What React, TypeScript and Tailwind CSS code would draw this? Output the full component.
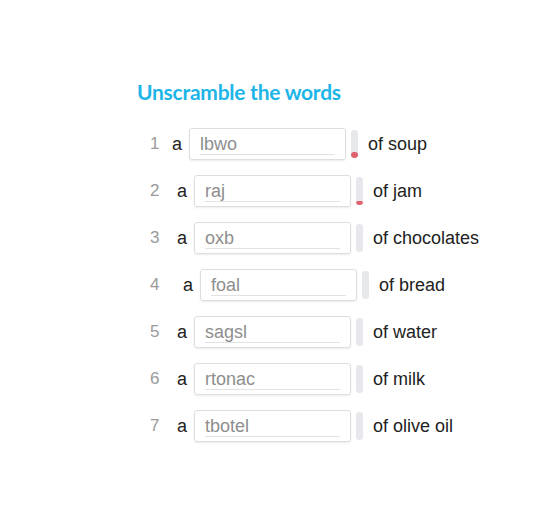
import React from "react";

const rows = [
  { n: 1, w: "lbwo", t: "of soup", ml: "ml-[14px]", fill: 6 },
  { n: 2, w: "raj", t: "of jam", ml: "ml-[19px]", fill: 4 },
  { n: 3, w: "oxb", t: "of chocolates", ml: "ml-[19px]", fill: 0 },
  { n: 4, w: "foal", t: "of bread", ml: "ml-[25px]", fill: 0 },
  { n: 5, w: "sagsl", t: "of water", ml: "ml-[19px]", fill: 0 },
  { n: 6, w: "rtonac", t: "of milk", ml: "ml-[19px]", fill: 0 },
  { n: 7, w: "tbotel", t: "of olive oil", ml: "ml-[19px]", fill: 0 },
];

export default function App() {
  return (
    <div className="w-[539px] h-[531px] bg-white" style={{ fontFamily: '"Liberation Sans", Arial, sans-serif' }}>
      <div className="pt-[80px] pl-[137px]">
        <h1 className="text-[21px] leading-[24px] font-bold text-[#1db5e8] tracking-[-0.25px]" style={{ fontFamily: 'Lato, "Noto Sans", sans-serif' }}>
          Unscramble the words
        </h1>
        <div className="mt-[24px] flex flex-col gap-[15px] pl-[13px]">
          {rows.map((r) => (
            <div key={r.n} className="flex items-center h-[32px]">
              <span className="w-[8px] text-[17px] text-[#9a9a9a] text-center">{r.n}</span>
              <span className={`${r.ml} text-[18px] text-[#222]`}>a</span>
              <div className="ml-[7px] w-[157px] h-[32px] rounded-[3px] border border-[#dedede] shadow-[0_1px_2px_rgba(0,0,0,0.08)] px-[10px] pt-[6px]">
                <div className="border-b border-[#e2e2e2] text-[18px] leading-[19px] text-[#8e8e8e]">{r.w}</div>
              </div>
              <div className="ml-[5px] w-[7px] h-[28px] rounded-[3px] bg-[#e6e8ec] flex flex-col justify-end overflow-hidden">
                {r.fill > 0 && <div className="bg-[#e0606e] rounded-[3px]" style={{ height: r.fill }} />}
              </div>
              <span className="ml-[10px] text-[18px] text-[#222]">{r.t}</span>
            </div>
          ))}
        </div>
      </div>
    </div>
  );
}
